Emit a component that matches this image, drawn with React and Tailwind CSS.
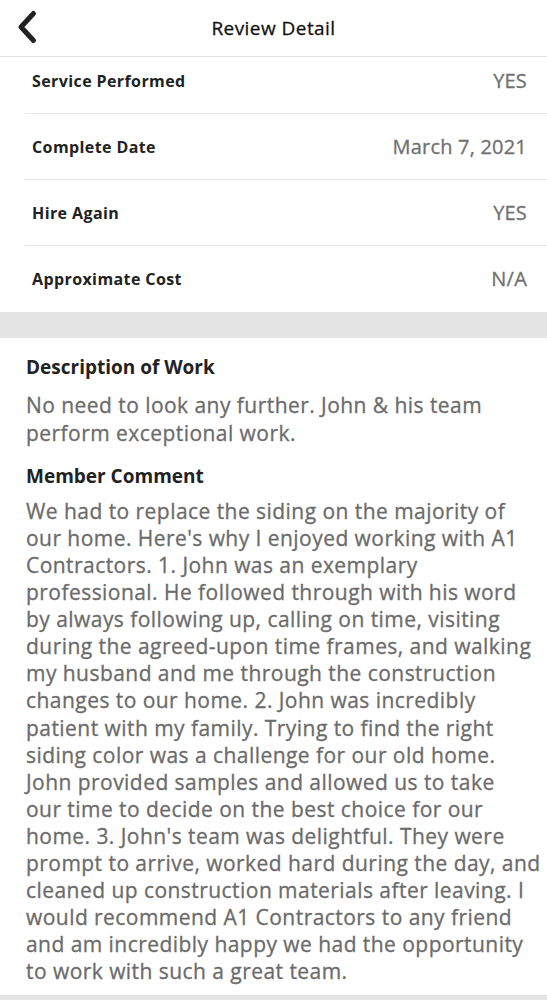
export default function App() {
  const rows = [
    ["Service Performed", "YES"],
    ["Complete Date", "March 7, 2021"],
    ["Hire Again", "YES"],
    ["Approximate Cost", "N/A"],
  ];
  const desc = ["No need to look any further. John & his team", "perform exceptional work."];
  const comment = [
    "We had to replace the siding on the majority of",
    "our home. Here's why I enjoyed working with A1",
    "Contractors. 1. John was an exemplary",
    "professional. He followed through with his word",
    "by always following up, calling on time, visiting",
    "during the agreed-upon time frames, and walking",
    "my husband and me through the construction",
    "changes to our home. 2. John was incredibly",
    "patient with my family. Trying to find the right",
    "siding color was a challenge for our old home.",
    "John provided samples and allowed us to take",
    "our time to decide on the best choice for our",
    "home. 3. John's team was delightful. They were",
    "prompt to arrive, worked hard during the day, and",
    "cleaned up construction materials after leaving. I",
    "would recommend A1 Contractors to any friend",
    "and am incredibly happy we had the opportunity",
    "to work with such a great team.",
  ];
  return (
    <div className="w-[547px] h-[1000px] overflow-hidden bg-white flex flex-col" style={{ fontFamily: '"Open Sans", sans-serif' }}>
      <div className="relative h-[57px] shrink-0 flex items-center justify-center border-b border-[#e2e2e2]">
        <svg className="absolute left-[14px] top-[9px]" width="26" height="36" viewBox="0 0 26 36" fill="none">
          <path d="M19.5 4.5 L7 18 L19.5 31.5" stroke="#222" strokeWidth="5" strokeLinecap="round" strokeLinejoin="round" />
        </svg>
        <span className="text-[19px] text-[#111] tracking-[0.45px] [-webkit-text-stroke:0.3px_#111]">Review Detail</span>
      </div>
      <div className="shrink-0">
        {rows.map(([l, v], i) => (
          <div
            key={l}
            className={`ml-[25px] pr-[20px] pl-[7px] flex items-center justify-between ${i === 0 ? "h-[57px] pb-[9px]" : "h-[66px]"} ${i < rows.length - 1 ? "border-b border-[#e6e6e6]" : ""}`}
          >
            <span className="text-[16px] font-bold text-[#222] tracking-[0.4px]">{l}</span>
            <span className="text-[20px] text-[#707070] tracking-[0.2px] [-webkit-text-stroke:0.3px_#707070]">{v}</span>
          </div>
        ))}
      </div>
      <div className="h-[26px] shrink-0 bg-[#e4e4e4]" />
      <div className="px-[26px] pt-[15px] shrink-0">
        <div className="text-[19px] font-bold text-[#222] leading-[28px]">Description of Work</div>
        <p className="text-[21px] text-[#6b6b6b] leading-[28px] tracking-[0.45px] mt-[10px] whitespace-nowrap [-webkit-text-stroke:0.3px_#6b6b6b]">
          {desc.map((t) => (
            <span key={t} className="block">{t}</span>
          ))}
        </p>
        <div className="text-[19px] font-bold text-[#222] leading-[28px] mt-[15px]">Member Comment</div>
        <p className="text-[21px] text-[#6b6b6b] leading-[27.06px] tracking-[0.45px] mt-[8px] whitespace-nowrap [-webkit-text-stroke:0.3px_#6b6b6b]">
          {comment.map((t) => (
            <span key={t} className="block">{t}</span>
          ))}
        </p>
      </div>
      <div className="flex-1" />
      <div className="h-[5px] shrink-0 bg-[#e4e4e4]" />
    </div>
  );
}
